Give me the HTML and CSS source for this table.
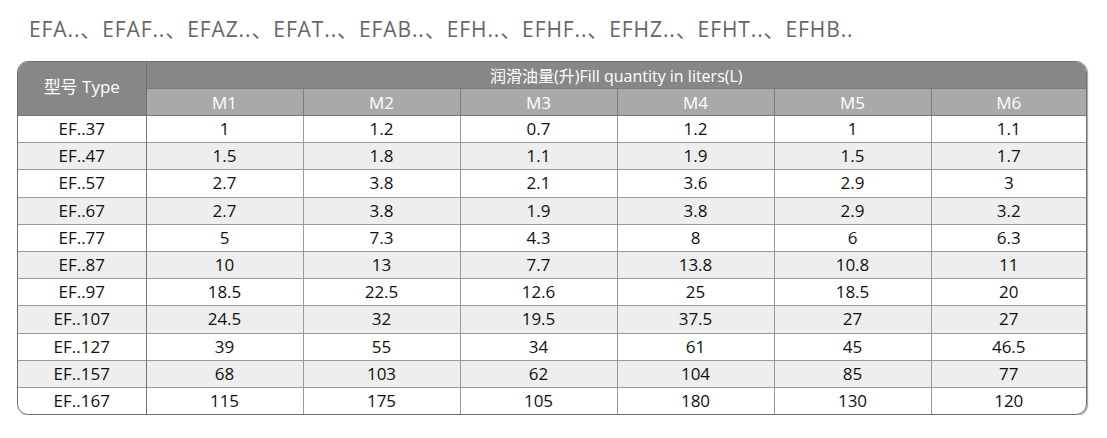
FILE: index.html
```html
<!DOCTYPE html>
<html>
<head>
<meta charset="utf-8">
<link rel="stylesheet" href="styles.css">
</head>
<body>
<h1 class="title">EFA..、EFAF..、EFAZ..、EFAT..、EFAB..、EFH..、EFHF..、EFHZ..、EFHT..、EFHB..</h1>
<div class="frame">
<table class="grid">
<colgroup>
<col class="c-type"><col class="c-m"><col class="c-m"><col class="c-m"><col class="c-m"><col class="c-m"><col class="c-last">
</colgroup>
<thead>
<tr class="h1"><th rowspan="2" class="type-h">型号 Type</th><th colspan="6">润滑油量(升)Fill quantity in liters(L)</th></tr>
<tr class="h2"><th>M1</th><th>M2</th><th>M3</th><th>M4</th><th>M5</th><th>M6</th></tr>
</thead>
<tbody>
<tr><td class="t">EF..37</td><td>1</td><td>1.2</td><td>0.7</td><td>1.2</td><td>1</td><td>1.1</td></tr>
<tr><td class="t">EF..47</td><td>1.5</td><td>1.8</td><td>1.1</td><td>1.9</td><td>1.5</td><td>1.7</td></tr>
<tr><td class="t">EF..57</td><td>2.7</td><td>3.8</td><td>2.1</td><td>3.6</td><td>2.9</td><td>3</td></tr>
<tr><td class="t">EF..67</td><td>2.7</td><td>3.8</td><td>1.9</td><td>3.8</td><td>2.9</td><td>3.2</td></tr>
<tr><td class="t">EF..77</td><td>5</td><td>7.3</td><td>4.3</td><td>8</td><td>6</td><td>6.3</td></tr>
<tr><td class="t">EF..87</td><td>10</td><td>13</td><td>7.7</td><td>13.8</td><td>10.8</td><td>11</td></tr>
<tr><td class="t">EF..97</td><td>18.5</td><td>22.5</td><td>12.6</td><td>25</td><td>18.5</td><td>20</td></tr>
<tr><td class="t">EF..107</td><td>24.5</td><td>32</td><td>19.5</td><td>37.5</td><td>27</td><td>27</td></tr>
<tr><td class="t">EF..127</td><td>39</td><td>55</td><td>34</td><td>61</td><td>45</td><td>46.5</td></tr>
<tr><td class="t">EF..157</td><td>68</td><td>103</td><td>62</td><td>104</td><td>85</td><td>77</td></tr>
<tr><td class="t">EF..167</td><td>115</td><td>175</td><td>105</td><td>180</td><td>130</td><td>120</td></tr>
</tbody>
</table>
</div>
</body>
</html>
```
FILE: styles.css
```css
html, body {
  margin: 0;
  padding: 0;
  background: #fff;
}
body {
  font-family: "Open Sans", "Noto Sans CJK SC", sans-serif;
  color: #111;
}
.title {
  margin: 0;
  padding: 15px 0 0 29px;
  height: 46px;
  box-sizing: border-box;
  font-size: 21px;
  font-weight: 400;
  color: #666;
  line-height: 28px;
  letter-spacing: 0.9px;
  white-space: nowrap;
}
.frame {
  margin-left: 17px;
  width: 1070px;
  box-sizing: border-box;
  border: 1px solid #6f6f6f;
  border-radius: 11px;
  overflow: hidden;
  box-shadow: 1px 1px 1px rgba(0,0,0,0.35);
  margin-top: 15px;
}
.grid {
  width: 1068px;
  table-layout: fixed;
  border-collapse: collapse;
  font-size: 17px;
}
.c-type { width: 128px; }
.c-m { width: 157px; }
.c-last { width: 155px; }
.grid th, .grid td {
  padding: 0;
  text-align: center;
  font-weight: 400;
}
.h1 th {
  background: #878787;
  color: #fff;
  height: 26px;
  font-size: 16px;
  border-bottom: 1px solid #7a7a7a;
}
.h2 th {
  background: #a9a9a9;
  color: #fff;
  height: 26px;
  border-left: 1px solid #7c7c7c;
  border-bottom: 1px solid #777;
  font-size: 17px;
}
.grid .type-h {
  border-right: 1px solid #6f6f6f;
  border-bottom: 1px solid #777;
  background: #878787;
  font-size: 17px;
  padding-bottom: 6px;
}
.grid td {
  height: 26.2px;
  border-top: 1px solid #9a9a9a;
  border-left: 1px solid #999;
  line-height: 20px;
}
.grid tbody tr:first-child td { border-top: none; }
.grid td.t { border-left: none; border-right: 1px solid #777; }
.grid tbody tr:nth-child(even) td { background: #eeeeee; }
```
